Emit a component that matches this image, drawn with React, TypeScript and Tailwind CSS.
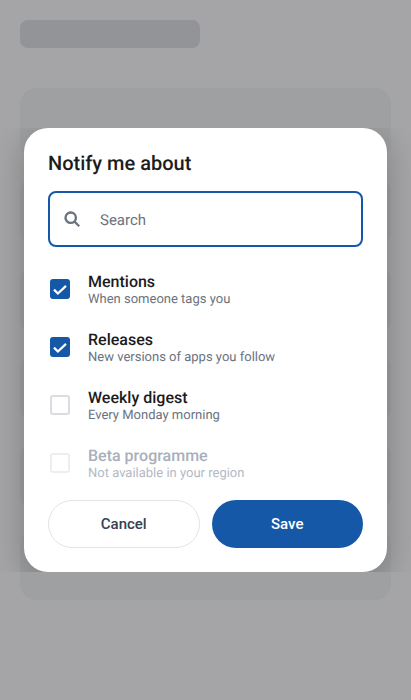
import React from "react";

const rows = [
  { title: "Mentions", sub: "When someone tags you", checked: true, disabled: false },
  { title: "Releases", sub: "New versions of apps you follow", checked: true, disabled: false },
  { title: "Weekly digest", sub: "Every Monday morning", checked: false, disabled: false },
  { title: "Beta programme", sub: "Not available in your region", checked: false, disabled: true },
];

function Box({ checked, disabled }: { checked: boolean; disabled: boolean }) {
  if (checked) {
    return (
      <span className="mx-0.5 flex h-5 w-5 shrink-0 items-center justify-center rounded-[3px] bg-[#1558a8]">
        <svg viewBox="0 0 20 20" className="h-5 w-5" fill="none" stroke="#ffffff" strokeWidth="2.2">
          <path d="M4 10.6 L7.9 14.5 L16 6.9" />
        </svg>
      </span>
    );
  }
  return (
    <span
      className={
        disabled
          ? "mx-0.5 h-5 w-5 shrink-0 rounded-[3px] border-2 border-[#eceef1] bg-white"
          : "mx-0.5 h-5 w-5 shrink-0 rounded-[3px] border-2 border-[#d9dce1] bg-white"
      }
    />
  );
}

export default function App() {
  return (
    <div className="relative h-[700px] w-[411px] overflow-hidden bg-[#f3f4f6] font-['Roboto',sans-serif] [text-rendering:geometricPrecision] antialiased">
      <div className="flex flex-col gap-4 p-5">
        <div className="mb-6 h-7 w-[180px] rounded-lg bg-[#d8dadf]" />
        {[0, 1, 2, 3, 4, 5].map((i) => (
          <div key={i} className="h-[72px] rounded-2xl bg-[#ebecef]" />
        ))}
      </div>
      <div className="absolute inset-0 flex items-center bg-black/[0.32]">
        <div className="w-full overflow-hidden px-6">
          <div className="flex flex-col rounded-3xl bg-white p-6 shadow-[0_8px_32px_rgba(0,0,0,0.24)]">
            <h2 className="text-[20px] leading-[23px] font-[490] text-[#1c1c1e]">Notify me about</h2>
            <div className="mt-4 flex h-14 items-center rounded-lg border-2 border-[#1558a8] pl-[14px]">
              <svg viewBox="0 0 16 16" className="h-4 w-4 shrink-0" fill="none" stroke="#6b7280">
                <circle cx="6.7" cy="6.7" r="5.2" strokeWidth="2.4" />
                <path d="M10.6 10.6 L15.2 15.2" strokeWidth="2.2" />
              </svg>
              <span className="ml-5 pt-0.5 text-[15px] text-[#6b7280]">Search</span>
            </div>
            <div className="mt-[13px] flex flex-col">
              {rows.map((r) => (
                <div key={r.title} className="flex h-[58px] items-center gap-4">
                  <Box checked={r.checked} disabled={r.disabled} />
                  <div className="flex flex-col pt-0.5">
                    <span
                      className={
                        r.disabled
                          ? "text-[16px] leading-[19px] font-[490] text-[#a9afba]"
                          : "text-[16px] leading-[19px] font-[490] text-[#1c1c1e]"
                      }
                    >
                      {r.title}
                    </span>
                    <span
                      className={
                        r.disabled
                          ? "text-[13px] leading-[17px] text-[#b4b9c3]"
                          : "text-[13px] leading-[17px] text-[#6b7280]"
                      }
                    >
                      {r.sub}
                    </span>
                  </div>
                </div>
              ))}
            </div>
            <div className="mt-2 grid grid-cols-2 gap-3">
              <button className="h-12 rounded-full border border-[#e2e4ea] bg-white text-[15px] font-[490] text-[#374151]">
                Cancel
              </button>
              <button className="h-12 rounded-full bg-[#1558a8] text-[15px] font-[490] text-white">
                Save
              </button>
            </div>
          </div>
        </div>
      </div>
    </div>
  );
}
